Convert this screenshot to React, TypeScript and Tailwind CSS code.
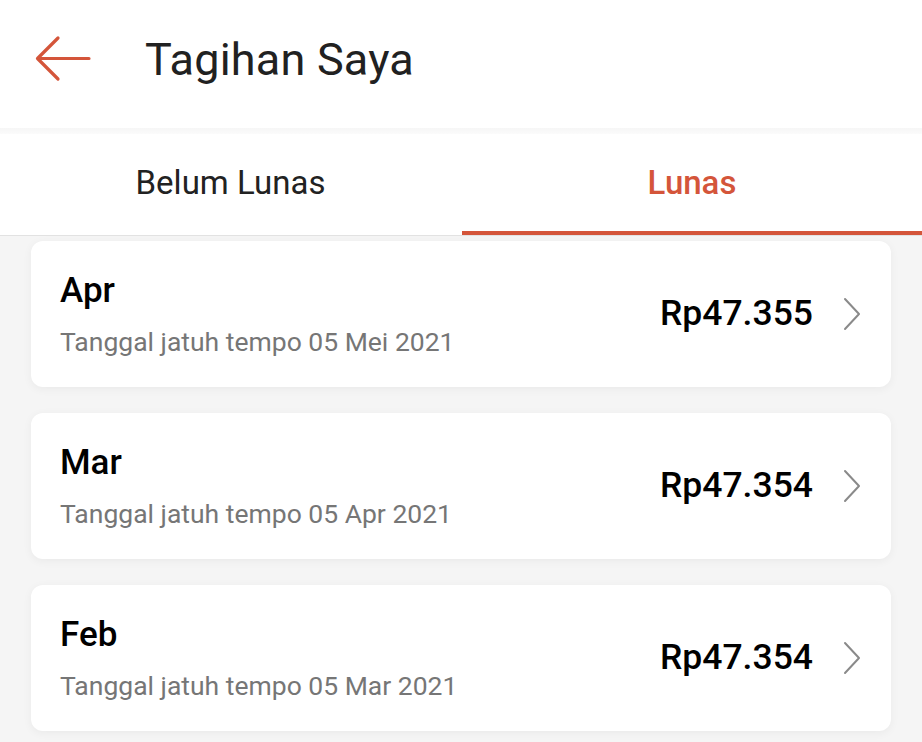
const bills = [
  { month: "Apr", due: "Tanggal jatuh tempo 05 Mei 2021", amount: "Rp47.355" },
  { month: "Mar", due: "Tanggal jatuh tempo 05 Apr 2021", amount: "Rp47.354" },
  { month: "Feb", due: "Tanggal jatuh tempo 05 Mar 2021", amount: "Rp47.354" },
];

function BackArrow() {
  return (
    <svg width="58" height="48" viewBox="0 0 58 48" fill="none">
      <path
        d="M55 23.5H4M24 3L3.5 23.5L24 44"
        stroke="#d4553a"
        strokeWidth="3.2"
        strokeLinecap="round"
        strokeLinejoin="round"
      />
    </svg>
  );
}

function Chevron() {
  return (
    <svg width="20" height="34" viewBox="0 0 20 34" fill="none">
      <path
        d="M3 2L17 17L3 32"
        stroke="#8a8a8a"
        strokeWidth="2"
        strokeLinecap="round"
        strokeLinejoin="round"
      />
    </svg>
  );
}

export default function App() {
  return (
    <div className="w-[922px] h-[742px] overflow-hidden bg-[#f5f5f5] font-['Roboto','Liberation_Sans',sans-serif]">
      <header className="h-[128px] bg-white flex items-center pl-[34px] pb-[10px]">
        <BackArrow />
        <h1 className="ml-[53px] text-[45px] text-[#212121] leading-none tracking-[0.2px]">
          Tagihan Saya
        </h1>
      </header>
      <div className="h-[6px] bg-gradient-to-b from-[#f6f6f6] to-[#fbfbfb]" />
      <nav className="h-[102px] bg-white grid grid-cols-2 border-b border-[#e2e2e2]">
        <div className="flex items-center justify-center text-[33px] text-[#222] pb-[4px]">
          Belum Lunas
        </div>
        <div className="flex items-center justify-center text-[33px] font-medium text-[#d4553a] border-b-[4px] border-[#d4553a] ml-[1px]">
          Lunas
        </div>
      </nav>
      <div className="px-[31px] pt-[5px] flex flex-col gap-[26px]">
        {bills.map((b) => (
          <div
            key={b.month}
            className="h-[146px] rounded-[12px] bg-white shadow-[0_2px_10px_rgba(0,0,0,0.05)] flex items-center justify-between pl-[29px] pr-[29px]"
          >
            <div className="flex flex-col">
              <div className="text-[35px] font-medium text-black leading-none">
                {b.month}
              </div>
              <div className="mt-[21px] text-[26.5px] text-[#767676] leading-none">
                {b.due}
              </div>
            </div>
            <div className="flex items-center gap-[29px]">
              <div className="text-[35.5px] font-medium text-black leading-none">
                {b.amount}
              </div>
              <Chevron />
            </div>
          </div>
        ))}
      </div>
    </div>
  );
}
